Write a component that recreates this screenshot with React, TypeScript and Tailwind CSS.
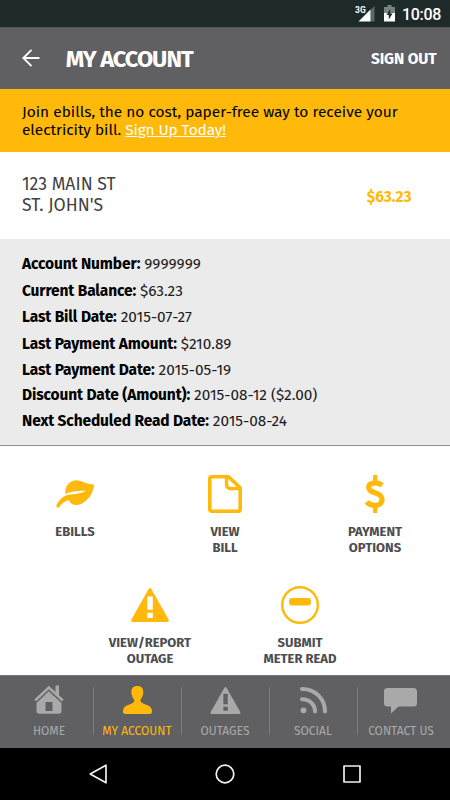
import React from "react";

const sans = "font-['Fira_Sans','Noto_Sans',sans-serif]";

function StatusBar() {
  return (
    <div className="flex h-[27px] items-center justify-end bg-[#1e2a2a] pr-[9px]">
      <svg width="20" height="17" viewBox="0 0 20 17" className="mr-[9px]">
        <path d="M15.5 5v11.500h4V1z" fill="#5f6868" />
        <path d="M15.5 4.500V16.500H3.500z" fill="#fff" />
        <text x="0" y="8" fontSize="8.5" fontWeight="700" fill="#fff" className="font-['Roboto',sans-serif]">3G</text>
      </svg>
      <svg width="11" height="17" viewBox="0 0 11 17" className="mr-[7px]">
        <path d="M3.5 0h4v2H11v7H0V2h3.500z" fill="#7b8484" />
        <path d="M0 8h11v8.500H0z" fill="#fff" />
        <path d="M6.300 4 2.500 10h2.300v4.500L8.600 8.500H6.300z" fill="#1e2a2a" />
      </svg>
      <span className="pt-[2px] font-['Roboto',sans-serif] text-[16px] leading-[20px] font-medium tracking-[-0.3px] text-white">10:08</span>
    </div>
  );
}

function Header() {
  return (
    <header className="flex h-[62px] items-center border-t border-[#535354] bg-[#606062] pr-[13.5px] pl-[22px] font-bold text-white">
      <svg width="18" height="18" viewBox="0 0 18 18" fill="none" stroke="#fff" strokeWidth="1.8" className="mt-[-2px]">
        <path d="M9.500 .8 1.300 9l8.200 8.200M1.300 9H17.500" />
      </svg>
      <h1 className="ml-[25.7px] flex-1 pt-[3px] text-[23.500px] tracking-[-1px]">MY ACCOUNT</h1>
      <span className="pt-[3px] text-[15.500px] tracking-[-0.120px]">SIGN OUT</span>
    </header>
  );
}

const details = [
  { label: "Account Number:", value: "9999999", row: "h-[26.5px]" },
  { label: "Current Balance:", value: "$63.23", row: "h-[26.5px]" },
  { label: "Last Bill Date:", value: "2015-07-27", row: "h-[26.5px]" },
  { label: "Last Payment Amount:", value: "$210.89", row: "h-[26.5px]" },
  { label: "Last Payment Date:", value: "2015-05-19", row: "h-[24.7px]" },
  { label: "Discount Date (Amount):", value: "2015-08-12 ($2.00)", row: "h-[26.5px]" },
  { label: "Next Scheduled Read Date:", value: "2015-08-24", row: "h-[26.5px]" },
];

function Details() {
  return (
    <section className="flex h-[207px] flex-col border-b border-[#919191] bg-[#ebebeb] pt-[12.1px] pl-[22px] text-[15.500px] text-black">
      {details.map((d) => (
        <div key={d.label} className={`flex shrink-0 items-baseline gap-[4px] leading-[26px] whitespace-nowrap ${d.row}`}>
          <b className="tracking-[-0.12px]">{d.label}</b>
          <span className="text-[15.400px] text-[#1a1a1a]">{d.value}</span>
        </div>
      ))}
    </section>
  );
}

function Leaf() {
  return (
    <svg width="38" height="38" viewBox="0 0 38 38" fill="#ffb90b">
      <path d="M38.300 9.500C37 18 33 25 25 29C20 31 14.500 30 12.800 25C8 26.500 5 29 2.500 33L0 31C2.500 26 5 22.500 10 20.500C16 18.500 23 20 30 15.800C23 15.500 15 16 9.500 19C8.500 14 11 8 17 5.900C24 3.500 28 9.500 38.300 9.500Z" />
    </svg>
  );
}

function Document() {
  return (
    <svg width="34" height="38" viewBox="0 0 34 38" fill="none" stroke="#ffb90b" strokeWidth="3.600" strokeLinejoin="round">
      <path d="M3.500 1.800H20.500L32.200 12.800V34.500a1.700 1.700 0 0 1-1.700 1.700H3.500a1.700 1.700 0 0 1-1.700-1.700V3.500a1.700 1.700 0 0 1 1.700-1.700Z" />
      <path d="M18.500 2v6.800c0 3.300 1.500 4.900 5 4.900H32" strokeWidth="3.300" />
    </svg>
  );
}

function Dollar() {
  return (
    <svg width="20" height="38" viewBox="0 0 20 38" fill="none" stroke="#ffb90b">
      <path d="M10.200 0v8M10.200 30v8" strokeWidth="4.200" />
      <path d="M17.200 10.300C15.300 8.700 13 7.800 10.300 7.800C6.500 7.800 3.700 9.300 3.700 12.300C3.700 15.500 6 16.500 10.500 17.900C15.300 19.400 17 21.200 17 24.700C17 28.500 14 30.300 9.800 30.300C6.500 30.300 3.500 29 1.700 26.900" strokeWidth="5.200" />
    </svg>
  );
}

function Warning({ fill, mark, className }: { fill: string; mark: string; className: string }) {
  return (
    <svg viewBox="0 0 38 34" className={className}>
      <path d="M17.500 1.200q1.500-2.200 3 0L37.600 31.500q.9 2.500-1.500 2.500H1.900Q-.5 34 .4 31.500Z" fill={fill} />
      <path d="M16.300 8.500h5.500v13.200h-5.500zM16.300 24.800h5.500V30h-5.500z" fill={mark} />
    </svg>
  );
}

function Meter() {
  return (
    <svg width="38" height="38" viewBox="0 0 38 38">
      <circle cx="19" cy="19" r="17.800" fill="none" stroke="#ffb90b" strokeWidth="2.400" />
      <rect x="8" y="12" width="22" height="7.500" rx="3" fill="#ffb90b" />
    </svg>
  );
}

function Action({ icon, lines }: { icon: React.ReactNode; lines: string[] }) {
  return (
    <div className="flex w-[150px] flex-col items-center text-[13px] leading-[16px] font-bold text-[#4c4d4f]">
      <div className="mb-[10.5px] flex h-[38px] items-center">{icon}</div>
      {lines.map((line) => (
        <span key={line}>{line}</span>
      ))}
    </div>
  );
}

function Actions() {
  return (
    <main className="h-[229px] bg-white pt-[29px]">
      <div className="flex h-[111px]">
        <Action icon={<Leaf />} lines={["EBILLS"]} />
        <Action icon={<Document />} lines={["VIEW", "BILL"]} />
        <Action icon={<Dollar />} lines={["PAYMENT", "OPTIONS"]} />
      </div>
      <div className="flex justify-center">
        <Action icon={<Warning fill="#ffb90b" mark="#fff" className="h-[34px] w-[38px]" />} lines={["VIEW/REPORT", "OUTAGE"]} />
        <Action icon={<Meter />} lines={["SUBMIT", "METER READ"]} />
      </div>
    </main>
  );
}

function Tab({ icon, label, tone, last }: { icon: React.ReactNode; label: string; tone: string; last?: boolean }) {
  return (
    <div className="flex w-[88px] items-start">
      <div className={`flex flex-1 flex-col items-center text-[12px] leading-[16px] whitespace-nowrap ${tone}`}>
        <div className="mb-[9px] flex h-[31px] items-end">{icon}</div>
        {label}
      </div>
      {!last && <div className="mt-[4px] -mr-px h-[47px] w-px bg-[#7b7b7d]" />}
    </div>
  );
}

function TabBar() {
  return (
    <nav className="flex h-[73px] border-t border-[#77777a] bg-[#606062] px-[5px] pt-[7px]">
      <Tab
        label="HOME"
        tone="text-[#a9a9aa]"
        icon={
          <svg width="30" height="29" viewBox="0 0 30 29">
            <path d="M1.200 15.500 14.800 2.500 28.800 15.500" fill="none" stroke="#a9a9aa" strokeWidth="2.500" />
            <path d="M21.500 .500h3.500v12l-3.500-3zM2.500 18 14.800 6.300 27.500 18v8a2.700 2.700 0 0 1-2.700 2.700H5.200a2.700 2.700 0 0 1-2.700-2.700z" fill="#a9a9aa" />
            <path d="M11.500 17h7v9h-7z" fill="#606062" />
          </svg>
        }
      />
      <Tab
        label="MY ACCOUNT"
        tone="text-[#ffb90b]"
        icon={
          <svg width="29" height="28" viewBox="0 0 29 28" fill="#ffb90b">
            <path d="M14.300 0C18.500 0 20.500 2.500 20.200 6.500C20 9.500 19 12 17.500 13.500C17 16 18.500 17 22 18.200C27 20 29 21.500 29 25.500Q29 28 26.500 28H2.500Q0 28 0 25.500C0 21.500 2 20 7 18.200C10.500 17 11.700 16 11.200 13.500C9.500 12 8.600 9.500 8.400 6.500C8.200 2.500 10.200 0 14.300 0Z" />
          </svg>
        }
      />
      <Tab
        label="OUTAGES"
        tone="text-[#a9a9aa]"
        icon={<Warning fill="#a9a9aa" mark="#606062" className="h-[27px] w-[31px]" />}
      />
      <Tab
        label="SOCIAL"
        tone="text-[#a9a9aa]"
        icon={
          <svg width="27" height="28" viewBox="0 0 27 28" fill="none" stroke="#a9a9aa" strokeWidth="4" strokeLinecap="round">
            <circle cx="3.500" cy="24.300" r="2.900" fill="#a9a9aa" stroke="none" />
            <path d="M2 13.300c7.500 0 13 5 13 12.200M2 3c13 0 23 9.500 23 22.500" />
          </svg>
        }
      />
      <Tab
        label="CONTACT US"
        tone="text-[#a9a9aa]"
        last
        icon={
          <svg width="33" height="27" viewBox="0 0 33 27" fill="#a9a9aa" className="mr-[1px]">
            <path d="M3.500 1h26A3.500 3.500 0 0 1 33 4.500v11.500a3.500 3.500 0 0 1-3.500 3.500H14.500L7 26.500V19.500H3.500A3.500 3.500 0 0 1 0 16v-11.500A3.500 3.500 0 0 1 3.500 1Z" />
          </svg>
        }
      />
    </nav>
  );
}

function SystemNav() {
  return (
    <div className="flex h-[52px] items-center justify-center gap-[106.5px] bg-black">
      <svg width="20" height="20" viewBox="0 0 20 20" fill="none" stroke="#f0f0f0" strokeWidth="1.700" strokeLinejoin="round">
        <path d="M17 1.200v17.600L1.200 10z" />
      </svg>
      <svg width="20" height="20" viewBox="0 0 20 20" fill="none" stroke="#f0f0f0" strokeWidth="1.700">
        <circle cx="10" cy="10" r="8.800" />
      </svg>
      <svg width="20" height="20" viewBox="0 0 20 20" fill="none" stroke="#f0f0f0" strokeWidth="1.700" strokeLinejoin="round">
        <path d="M2 2h16v16h-16z" />
      </svg>
    </div>
  );
}

export default function App() {
  return (
    <div className={`h-[800px] w-[450px] overflow-hidden bg-white ${sans}`}>
      <StatusBar />
      <Header />
      <section className="h-[63px] bg-[#ffb90b] pt-[14px] pl-[22px] text-[15.450px] leading-[18px] whitespace-nowrap text-black">
        <p>Join ebills, the no cost, paper-free way to receive your</p>
        <p className="tracking-[-0.04px]">
          electricity bill. <a className="tracking-[-0.12px] text-white underline">Sign Up Today!</a>
        </p>
      </section>
      <section className="flex h-[87px] items-center justify-between pr-[38.5px] pl-[22px]">
        <div className="pb-[2px] text-[17.600px] leading-[21px] text-[#414143]">
          <p>123 MAIN ST</p>
          <p>ST. JOHN'S</p>
        </div>
        <span className="pt-[3.5px] text-[15.500px] font-bold text-[#ffb90b]">$63.23</span>
      </section>
      <Details />
      <Actions />
      <TabBar />
      <SystemNav />
    </div>
  );
}
